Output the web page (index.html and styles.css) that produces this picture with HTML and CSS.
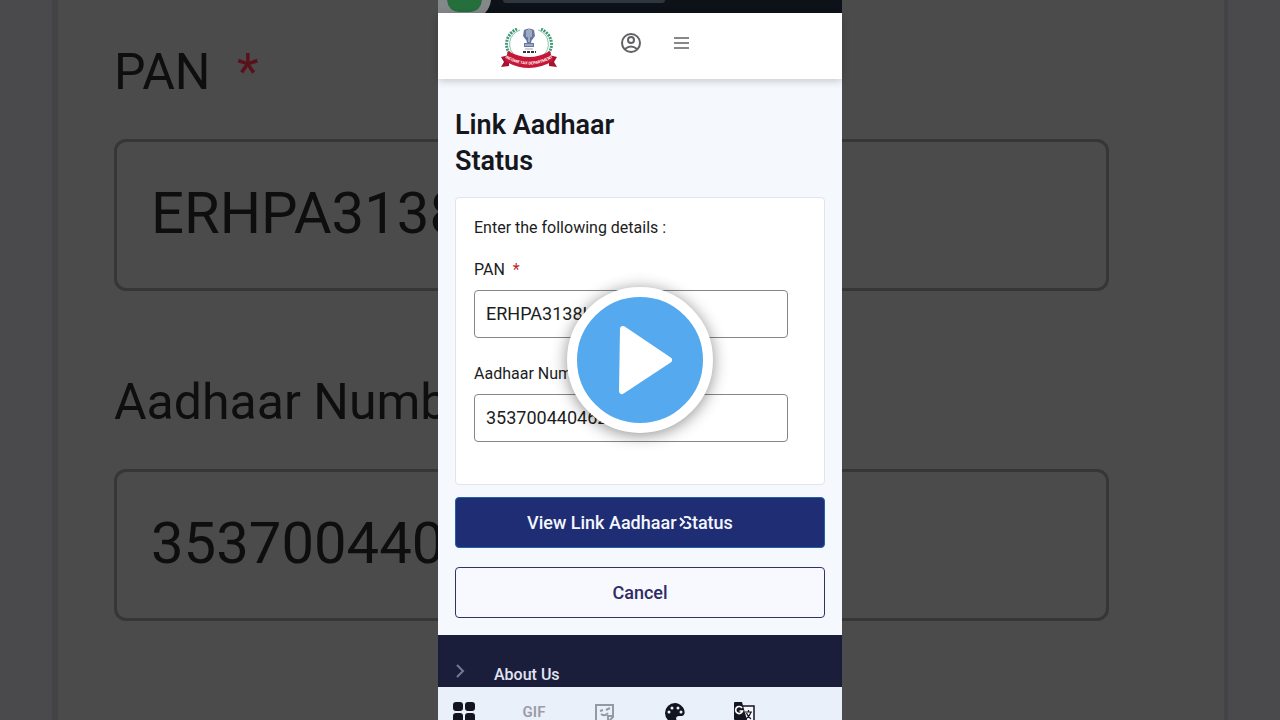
FILE: index.html
```html
<!DOCTYPE html>
<html lang="en">
<head>
  <meta charset="UTF-8">
  <meta name="viewport" content="width=device-width, initial-scale=1">
  <title>Link Aadhaar Status</title>
  <link rel="stylesheet" href="styles.css">
</head>
<body>
  <div class="player">
    <!-- enlarged, dimmed copy of the form behind the phone -->
    <div class="backdrop">
      <div class="backdrop-card">
        <label for="panLarge">PAN <span class="required">*</span></label>
        <input type="text" id="panLarge" value="ERHPA3138K" tabindex="-1" readonly>
        <label for="aadhaarLarge">Aadhaar Number</label>
        <input type="text" id="aadhaarLarge" value="353700440462" tabindex="-1" readonly>
      </div>
    </div>

    <div class="phone">
      <div class="browser-bar">
        <svg class="tab-badge" width="53" height="13" viewBox="0 0 53 13">
          <path d="M0 0H53Q52 8 47 13H0Z" fill="#85888a"/>
          <path d="M9 0H44Q43 11 32 12H21Q10 11 9 0Z" fill="#246f3c"/>
        </svg>
        <span class="address"></span>
      </div>

      <header>
        <a href="#" class="logo" aria-label="Income Tax Department">
          <svg width="58" height="44" viewBox="0 0 58 44">
            <path d="M17 1A19 17 0 0 0 13 29Q20 36 29 36Q38 36 45 29A19 17 0 0 0 41 1" fill="none" stroke="#3f9a78" stroke-width="3" stroke-dasharray="2 1"/>
            <path d="M20 2A16 15 0 0 0 16 28M38 2A16 15 0 0 1 42 28" fill="none" stroke="#8cc4ac" stroke-width="1"/>
            <g fill="#66789f">
              <path d="M24 2Q29 -1 34 2L35 8L32 12H26L23 8Z"/>
              <path d="M26 11h6l-1 4h-4zM24 15h10v4H24z"/>
            </g>
            <path d="M27 2v7M29 1v13M31 2v7M25 17h8" stroke="#d5dbe8" stroke-width="1"/>
            <path d="M25 21h8" stroke="#aaa" stroke-width="1"/>
            <path d="M23 24h13" stroke="#333" stroke-width="2" stroke-dasharray="3 1"/>
            <path d="M1 29l8-2v11l-8 1 3-5zM57 29l-8-2v11l8 1-3-5z" fill="#a3152f"/>
            <path d="M8 23Q29 35 50 23L53 33Q29 47 5 33Z" fill="#c81736"/>
            <path id="ribbon" d="M4 29Q29 44 54 29" fill="none"/>
            <text class="ribbon-text"><textPath href="#ribbon" startOffset="50%" text-anchor="middle">INCOME TAX DEPARTMENT</textPath></text>
          </svg>
        </a>
        <button type="button" class="icon-button" aria-label="Account">
          <svg width="22" height="22" viewBox="0 0 22 22" fill="none" stroke="#626266" stroke-width="2">
            <circle cx="11" cy="11" r="9"/>
            <circle cx="11" cy="8" r="3"/>
            <path d="M5 17Q11 12 17 17"/>
          </svg>
        </button>
        <button type="button" class="icon-button" aria-label="Menu">
          <svg width="22" height="22" viewBox="0 0 22 22" fill="none" stroke="#626266" stroke-width="1.5">
            <path d="M4 6H19M4 11H19M4 16H19"/>
          </svg>
        </button>
      </header>

      <main>
        <h1>Link Aadhaar<br>Status</h1>
        <form id="statusForm">
          <div class="card">
            <p>Enter the following details :</p>
            <label for="pan">PAN <span class="required">*</span></label>
            <input type="text" id="pan" value="ERHPA3138K" required>
            <label for="aadhaar">Aadhaar Number</label>
            <input type="text" id="aadhaar" value="353700440462" required>
          </div>
          <button type="submit" class="btn btn-primary">
            View Link Aadhaar Status
            <svg class="btn-arrow" width="8" height="12" viewBox="0 0 8 12" fill="none">
              <path d="M2 1l4 5-4 5" stroke="#1f2e74" stroke-width="4"/>
              <path d="M1 2l4 4-4 4" stroke="#f4f7ff" stroke-width="2"/>
            </svg>
          </button>
          <button type="button" class="btn btn-outline">Cancel</button>
        </form>
      </main>

      <footer>
        <svg width="10" height="14" viewBox="0 0 10 14" fill="none" stroke="#77798e" stroke-width="2">
          <path d="M1 1l6 6-6 6"/>
        </svg>
        <a href="#">About Us</a>
      </footer>

      <div class="keyboard-bar">
        <button type="button" class="key" aria-label="Apps">
          <svg width="22" height="22" viewBox="0 0 22 22" fill="#12151f">
            <rect x="0" y="0" width="10" height="9" rx="3"/>
            <rect x="12" y="0" width="10" height="9" rx="3"/>
            <rect x="0" y="11" width="10" height="9" rx="3"/>
            <rect x="12" y="11" width="10" height="9" rx="3"/>
          </svg>
        </button>
        <button type="button" class="key key-gif">GIF</button>
        <button type="button" class="key" aria-label="Stickers">
          <svg width="22" height="22" viewBox="0 0 22 22" fill="none" stroke="#9599a6" stroke-width="2">
            <path d="M3 3H20V15L15 20H3ZM20 14H15V20"/>
            <path d="M7 9l3-1M13 8l4-2M8 12Q12 15 15 11"/>
          </svg>
        </button>
        <button type="button" class="key" aria-label="Themes">
          <svg width="22" height="22" viewBox="0 0 22 22">
            <path d="M12 1A10 10 0 0 0 12 21C15 21 14 18 13 17C13 15 14 14 16 14H19C25 12 20 1 12 1Z" fill="#12151f"/>
            <g fill="#edf1fb">
              <circle cx="6" cy="10" r="1.500"/>
              <circle cx="9" cy="6" r="1.500"/>
              <circle cx="15" cy="6" r="1.500"/>
              <circle cx="18" cy="10" r="1.500"/>
            </g>
          </svg>
        </button>
        <button type="button" class="key" aria-label="Translate">
          <svg width="22" height="22" viewBox="0 0 22 22">
            <path d="M10 4H21V21H13" fill="#f5f7fc" stroke="#12151f" stroke-width="1.500"/>
            <path d="M2 0H9L14 18H2Q1 18 1 17V1Q1 0 2 0Z" fill="#12151f"/>
            <path d="M9 6A3.500 3.500 0 1 0 9.500 9H6.500" fill="none" stroke="#fff" stroke-width="1.700"/>
            <path d="M12 10H19M15.500 8V10M18 10Q17 14 13 17M13.500 11Q15 15 18 17" fill="none" stroke="#12151f" stroke-width="1.200"/>
          </svg>
        </button>
      </div>
    </div>

    <button type="button" class="play" aria-label="Play video">
      <svg width="54" height="70" viewBox="0 0 54 70">
        <path d="M4 4L50 35L3 66Z" fill="#fff" stroke="#fff" stroke-width="6" stroke-linejoin="round"/>
      </svg>
    </button>
  </div>

  <script>
    document.getElementById('statusForm').addEventListener('submit', function(e) {
      e.preventDefault();
    });
  </script>
</body>
</html>
```
FILE: styles.css
```css
* {
  box-sizing: border-box;
}
body {
  font-family: Roboto, sans-serif;
  margin: 0;
  background: #4a4a4c;
  color: #1c1d22;
}
button {
  font-family: inherit;
  cursor: pointer;
}
.player {
  position: relative;
  height: 100vh;
  overflow: hidden;
  display: grid;
  justify-items: center;
}
.backdrop,
.phone {
  grid-area: 1 / 1;
  min-height: 0;
}

/* backdrop */
.backdrop {
  width: 100%;
  padding: 0 52px;
}
.backdrop-card {
  height: 100vh;
  padding: 42px 115px 0 56px;
  background: #4b4b4b;
  border: solid #434345;
  border-width: 0 4px 0 6px;
  color: #0e0e0e;
}
.backdrop-card label {
  display: block;
  font-size: 50px;
  line-height: 60px;
  margin-bottom: 37px;
}
.backdrop-card .required {
  color: #5a1119;
  margin-left: 14px;
}
.backdrop-card input {
  display: block;
  width: 100%;
  height: 152px;
  margin-bottom: 81px;
  padding: 0 34px 4px;
  border: 3px solid #353737;
  border-radius: 12px;
  background: transparent;
  color: #0e0e0e;
  font-family: inherit;
  font-size: 58px;
}

/* phone */
.phone {
  position: relative;
  width: 100%;
  max-width: 404px;
  background: #f5f8fd;
}
.browser-bar {
  display: flex;
  align-items: flex-start;
  gap: 12px;
  height: 13px;
  background: #0d1218;
  overflow: hidden;
}
.tab-badge {
  flex: none;
}
.address {
  width: 162px;
  height: 3px;
  background: #30363d;
  border-radius: 0 0 8px 8px;
}
header {
  position: relative;
  display: flex;
  align-items: flex-start;
  height: 66px;
  padding: 15px 62px 0;
  background: #fff;
  box-shadow: 0 2px 8px rgba(0,0,0,0.2);
}
.logo {
  height: 44px;
  margin-right: 62px;
}
.ribbon-text {
  fill: #fff;
  font-size: 4px;
  font-weight: bold;
}
.icon-button {
  height: 22px;
  margin: 4px 28px 0 0;
  padding: 0;
  border: none;
  background: none;
}
main {
  padding: 28px 17px 17px;
}
h1 {
  margin: 0 0 18px;
  font-size: 27px;
  line-height: 36px;
  font-weight: 600;
  color: #15171c;
}
.card {
  height: 288px;
  margin-bottom: 12px;
  padding: 20px 36px 0 18px;
  background: #fff;
  border: 1px solid #e0e5ec;
  border-radius: 4px;
}
.card p,
.card label {
  display: block;
  margin: 0;
  font-size: 16px;
  line-height: 20px;
}
.card p {
  margin-bottom: 22px;
}
.required {
  color: #c0272d;
  margin-left: 4px;
}
.card input {
  display: block;
  width: 100%;
  height: 48px;
  margin: 10px 0 26px;
  padding: 0 11px 2px;
  border: 1px solid #85868a;
  border-radius: 4px;
  background: #fff;
  color: #1c1d22;
  font-family: inherit;
  font-size: 18px;
}
.btn {
  position: relative;
  display: block;
  width: 100%;
  height: 51px;
  border-radius: 4px;
  font-size: 18px;
  font-weight: 500;
}
.btn-primary {
  margin-bottom: 19px;
  padding: 0 26px 0 6px;
  border: 1px solid #2260a8;
  background: #1f2e74;
  color: #f4f7ff;
}
.btn-arrow {
  position: absolute;
  top: 18px;
  right: 137px;
}
.btn-outline {
  border: 1px solid #32335f;
  background: #f7f9fe;
  color: #2d2c64;
}
footer {
  display: flex;
  align-items: center;
  gap: 28px;
  height: 52px;
  padding: 20px 18px 0;
  background: #1b1e3b;
}
footer a {
  padding-top: 6px;
  color: #e2e4f3;
  font-size: 16px;
  font-weight: 500;
  text-decoration: none;
}
.keyboard-bar {
  display: flex;
  gap: 30px;
  height: 34px;
  padding: 15px 6px 0;
  background: #eaf0fa;
  overflow: hidden;
}
.key {
  display: flex;
  justify-content: center;
  flex: none;
  width: 40px;
  height: 22px;
  padding: 0;
  border: none;
  background: none;
}
.key-gif {
  align-items: flex-start;
  color: #9a9ca8;
  font-size: 15px;
  line-height: 20px;
  font-weight: 600;
}

/* play button */
.play {
  position: absolute;
  top: 50%;
  left: 50%;
  transform: translate(-50%, -50%);
  display: flex;
  align-items: center;
  justify-content: center;
  width: 146px;
  height: 146px;
  padding: 0 0 0 12px;
  border: 10px solid #fff;
  border-radius: 50%;
  background: #55aaef;
  box-shadow: 0 2px 16px rgba(0,0,0,0.45);
}
```
